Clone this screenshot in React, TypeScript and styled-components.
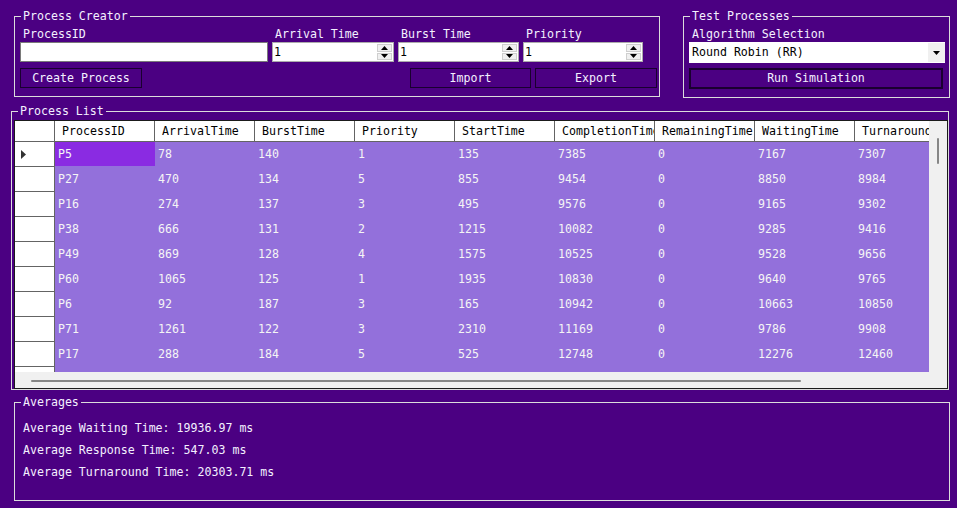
import React from "react";
import styled, { createGlobalStyle } from "styled-components";

const GlobalStyle = createGlobalStyle`
  html, body { margin: 0; padding: 0; background: #4B0082; }
  body {
    font-family: "DejaVu Sans Mono", "Liberation Mono", monospace;
    font-size: 11.6px;
    color: #f4f0ff;
  }
  * { box-sizing: border-box; }
`;

const Page = styled.div`
  width: 957px;
  height: 508px;
  padding-top: 9px;
  overflow: hidden;
  display: flex;
  flex-direction: column;
`;

const TopRow = styled.div`
  display: flex;
  align-items: flex-start;
`;

const Group = styled.fieldset<{ $w: number; $h: number; $ml: number; $mt?: number; $pad: string }>`
  margin: ${(p) => p.$mt ?? 0}px 0 0 ${(p) => p.$ml}px;
  width: ${(p) => p.$w}px;
  height: ${(p) => p.$h}px;
  border: 1px solid #dcdcdc;
  padding: ${(p) => p.$pad};
  min-width: 0;
`;

const Legend = styled.legend<{ $indent: number }>`
  padding: 0 2px;
  margin-left: ${(p) => p.$indent}px;
  line-height: 14px;
  font-size: 11.6px;
  color: #f4f0ff;
`;

const FieldGrid = styled.div`
  display: grid;
  grid-template-columns: 248px 122px 121px 120px;
  column-gap: 4px;
`;

const Field = styled.div`
  display: flex;
  flex-direction: column;
  gap: 1px;
`;

const Label = styled.div`
  padding-left: 3px;
  line-height: 14px;
  white-space: nowrap;
  color: #f4f0ff;
`;

const TextBox = styled.input`
  width: 100%;
  height: 20px;
  border: 1px solid #7a7a7a;
  background: #ffffff;
  padding: 0 1px;
  font: inherit;
  color: #000;
  outline: none;
`;

const NumBox = styled.div`
  height: 20px;
  border: 1px solid #acacac;
  background: #ffffff;
  display: flex;
`;

const NumInput = styled.input`
  flex: 1;
  min-width: 0;
  border: none;
  outline: none;
  padding: 0 1px;
  font: inherit;
  color: #000;
  background: transparent;
`;

const Spinner = styled.div`
  width: 16px;
  padding: 1px 1px 1px 0;
  display: flex;
  flex-direction: column;
  gap: 1px;
`;

const SpinButton = styled.div`
  flex: 1;
  background: #f0f0f0;
  border: 1px solid #cfcfcf;
  display: flex;
  align-items: center;
  justify-content: center;
`;

const ButtonRow = styled.div`
  display: flex;
  justify-content: space-between;
  width: 637px;
  margin-top: 6px;
`;

const ButtonGroup = styled.div`
  display: flex;
  gap: 4px;
`;

const Button = styled.button<{ $w: number; $thick?: boolean }>`
  width: ${(p) => p.$w}px;
  height: ${(p) => (p.$thick ? 21 : 20)}px;
  border: ${(p) => (p.$thick ? 2 : 1)}px solid #1a0030;
  background: transparent;
  color: #f4f0ff;
  font: inherit;
  padding: 1px 0 0;
  line-height: 1;
`;

const Combo = styled.div`
  width: 256px;
  height: 21px;
  margin-top: 1px;
  background: #ffffff;
  display: flex;
`;

const ComboText = styled.div`
  flex: 1;
  padding-left: 3px;
  line-height: 21px;
  color: #000;
`;

const DropButton = styled.div`
  width: 17px;
  margin: 1px 0;
  background: #f0f0f0;
  display: flex;
  align-items: center;
  justify-content: center;
`;

const RunRow = styled.div`
  margin-top: 5px;
`;

const GridFrame = styled.div`
  width: 934px;
  height: 269px;
  border: 1px solid #1b1b1b;
  background: #f0f0f0;
  display: flex;
  flex-direction: column;
`;

const GridBody = styled.div`
  display: flex;
  height: 251px;
`;

const Viewport = styled.div`
  width: 914px;
  overflow: hidden;
  background: #9370db;
`;

const Table = styled.div`
  display: grid;
  grid-template-columns: 40px repeat(9, 100px);
  grid-template-rows: 21px;
  grid-auto-rows: 25px;
  width: 940px;
`;

const HeaderCell = styled.div`
  background: #ffffff;
  color: #000;
  border-right: 1px solid #646464;
  border-bottom: 1px solid #646464;
  padding-left: 7px;
  line-height: 20px;
  white-space: nowrap;
  overflow: hidden;
`;

const Corner = styled.div`
  background: #ffffff;
  border-right: 1px solid #646464;
  border-bottom: 1px solid #646464;
`;

const RowHeader = styled.div`
  background: #ffffff;
  border-right: 1px solid #646464;
  border-bottom: 1px solid #646464;
  display: flex;
  align-items: center;
  padding-left: 6px;
`;

const DataCell = styled.div<{ $selected?: boolean }>`
  background: ${(p) => (p.$selected ? "#8a2be2" : "#9370db")};
  height: ${(p) => (p.$selected ? "24px" : "25px")};
  color: #f5f5f5;
  padding-left: 3px;
  line-height: ${(p) => (p.$selected ? "24px" : "25px")};
  white-space: nowrap;
  overflow: hidden;
`;

const VScroll = styled.div`
  width: 18px;
  background: #f0f0f0;
  padding: 17px 0 0 8px;
`;

const VThumb = styled.div`
  width: 2px;
  height: 26px;
  background: #868686;
  border-radius: 1px;
`;

const HScroll = styled.div`
  height: 16px;
  background: #f0f0f0;
  padding: 8px 0 0 16px;
`;

const HThumb = styled.div`
  width: 770px;
  height: 2px;
  background: #868686;
  border-radius: 1px;
`;

const AvgLines = styled.div`
  display: flex;
  flex-direction: column;
  gap: 8px;
`;

const AvgLine = styled.div`
  line-height: 14px;
  white-space: nowrap;
`;

const UpArrow = () => (
  <svg width="7" height="4" viewBox="0 0 7 4">
    <polygon points="0,4 7,4 3.5,0" fill="#000" />
  </svg>
);

const DownArrow = () => (
  <svg width="7" height="4" viewBox="0 0 7 4">
    <polygon points="0,0 7,0 3.5,4" fill="#000" />
  </svg>
);

const RowArrow = () => (
  <svg width="5" height="9" viewBox="0 0 5 9">
    <polygon points="0,0 5,4.5 0,9" fill="#333" />
  </svg>
);

const NumericField = ({ label }: { label: string }) => (
  <Field>
    <Label>{label}</Label>
    <NumBox>
      <NumInput defaultValue="1" />
      <Spinner>
        <SpinButton>
          <UpArrow />
        </SpinButton>
        <SpinButton>
          <DownArrow />
        </SpinButton>
      </Spinner>
    </NumBox>
  </Field>
);

const columns = [
  "ProcessID",
  "ArrivalTime",
  "BurstTime",
  "Priority",
  "StartTime",
  "CompletionTime",
  "RemainingTime",
  "WaitingTime",
  "TurnaroundTime",
];

const rows: (string | number)[][] = [
  ["P5", 78, 140, 1, 135, 7385, 0, 7167, 7307],
  ["P27", 470, 134, 5, 855, 9454, 0, 8850, 8984],
  ["P16", 274, 137, 3, 495, 9576, 0, 9165, 9302],
  ["P38", 666, 131, 2, 1215, 10082, 0, 9285, 9416],
  ["P49", 869, 128, 4, 1575, 10525, 0, 9528, 9656],
  ["P60", 1065, 125, 1, 1935, 10830, 0, 9640, 9765],
  ["P6", 92, 187, 3, 165, 10942, 0, 10663, 10850],
  ["P71", 1261, 122, 3, 2310, 11169, 0, 9786, 9908],
  ["P17", 288, 184, 5, 525, 12748, 0, 12276, 12460],
  ["", "", "", "", "", "", "", "", ""],
];

export default function App() {
  return (
    <>
      <GlobalStyle />
      <Page>
        <TopRow>
          <Group $w={646} $h={88} $ml={14} $pad="4px 2px 0 5px">
            <Legend $indent={1}>Process Creator</Legend>
            <FieldGrid>
              <Field>
                <Label>ProcessID</Label>
                <TextBox defaultValue="" />
              </Field>
              <NumericField label="Arrival Time" />
              <NumericField label="Burst Time" />
              <NumericField label="Priority" />
            </FieldGrid>
            <ButtonRow>
              <Button $w={122}>Create Process</Button>
              <ButtonGroup>
                <Button $w={121}>Import</Button>
                <Button $w={122}>Export</Button>
              </ButtonGroup>
            </ButtonRow>
          </Group>
          <Group $w={267} $h={89} $ml={23} $pad="4px 0 0 5px">
            <Legend $indent={1}>Test Processes</Legend>
            <Label>Algorithm Selection</Label>
            <Combo>
              <ComboText>Round Robin (RR)</ComboText>
              <DropButton>
                <DownArrow />
              </DropButton>
            </Combo>
            <RunRow>
              <Button $w={254} $thick>
                Run Simulation
              </Button>
            </RunRow>
          </Group>
        </TopRow>

        <Group $w={938} $h={286} $ml={11} $mt={6} $pad="2px 0 0 2px">
          <Legend $indent={4}>Process List</Legend>
          <GridFrame>
            <GridBody>
              <Viewport>
                <Table>
                  <Corner />
                  {columns.map((c) => (
                    <HeaderCell key={c}>{c}</HeaderCell>
                  ))}
                  {rows.map((r, ri) => (
                    <React.Fragment key={ri}>
                      <RowHeader>{ri === 0 ? <RowArrow /> : null}</RowHeader>
                      {r.map((v, ci) => (
                        <DataCell key={ci} $selected={ri === 0 && ci === 0}>
                          {v}
                        </DataCell>
                      ))}
                    </React.Fragment>
                  ))}
                </Table>
              </Viewport>
              <VScroll>
                <VThumb />
              </VScroll>
            </GridBody>
            <HScroll>
              <HThumb />
            </HScroll>
          </GridFrame>
        </Group>

        <Group $w={936} $h={106} $ml={14} $mt={5} $pad="12px 0 0 8px">
          <Legend $indent={-2}>Averages</Legend>
          <AvgLines>
            <AvgLine>Average Waiting Time: 19936.97 ms</AvgLine>
            <AvgLine>Average Response Time: 547.03 ms</AvgLine>
            <AvgLine>Average Turnaround Time: 20303.71 ms</AvgLine>
          </AvgLines>
        </Group>
      </Page>
    </>
  );
}
